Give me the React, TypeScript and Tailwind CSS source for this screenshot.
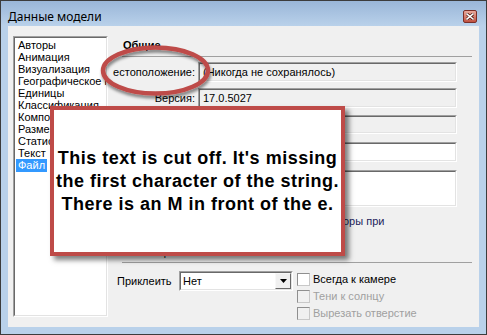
import React from "react";

const sunkenOuter =
  "border border-t-[#a0a0a0] border-l-[#a0a0a0] border-b-white border-r-white";
const sunkenInner =
  "border border-t-[#696969] border-l-[#696969] border-b-[#e3e3e3] border-r-[#e3e3e3]";

function Field({
  h,
  white,
  children,
}: {
  h: string;
  white?: boolean;
  children?: React.ReactNode;
}) {
  return (
    <div className={`${sunkenOuter} w-[259px] ${h}`}>
      <div
        className={`${sunkenInner} h-full w-full flex items-center pl-[3px] whitespace-nowrap overflow-hidden ${
          white ? "bg-white" : "bg-[#f0f0f0]"
        }`}
      >
        {children}
      </div>
    </div>
  );
}

function Row({ label, children }: { label?: string; children: React.ReactNode }) {
  return (
    <div className="flex items-center">
      <div className="w-[73px] text-right whitespace-nowrap flex justify-end">
        <span className="whitespace-nowrap">{label}</span>
      </div>
      <div className="ml-[3px]">{children}</div>
    </div>
  );
}

function Check({ label, disabled }: { label: string; disabled?: boolean }) {
  return (
    <div className="flex items-center h-[17px]">
      <div
        className={`w-[13px] h-[13px] border border-t-[#8f8f8f] border-l-[#8f8f8f] border-b-[#c8c8c8] border-r-[#c8c8c8] ${
          disabled ? "bg-[#f0f0f0]" : "bg-white"
        }`}
      />
      <span
        className={`ml-[3px] whitespace-nowrap ${disabled ? "text-[#a0a0a0]" : "text-black"}`}
      >
        {label}
      </span>
    </div>
  );
}

const items = [
  "Авторы",
  "Анимация",
  "Визуализация",
  "Географическое положение",
  "Единицы",
  "Классификация",
  "Компоненты",
  "Размеры",
  "Статистика",
  "Текст",
  "Файл",
];

export default function App() {
  return (
    <div className="relative w-[487px] h-[335px] overflow-hidden font-['Liberation_Sans',Arial,sans-serif] text-[11px] leading-[13px] text-black">
      <div className="flex flex-col h-full border border-[#3c3c3c] bg-[#b9d1ea]">
        {/* Title bar */}
        <div className="h-[25px] flex items-start pt-[8px] pl-[7px] pr-[9px] bg-gradient-to-b from-[#9ab6d8] to-[#b9d1ea]">
          <span className="font-['Noto_Sans',sans-serif] text-[12px] leading-[16px] text-black flex-1">
            Данные модели
          </span>
          <div className="mt-[1px] w-[14px] h-[13px] rounded-[2px] border border-[#7a2f28] bg-gradient-to-b from-[#e9a99c] to-[#c0503f] flex items-center justify-center">
            <svg width="8" height="7" viewBox="0 0 8 7">
              <path d="M1 1 L7 6 M7 1 L1 6" stroke="#4a1a14" strokeWidth="3" strokeLinecap="square" />
              <path d="M1 1 L7 6 M7 1 L1 6" stroke="#ffffff" strokeWidth="1.6" strokeLinecap="square" />
            </svg>
          </div>
        </div>
        {/* Client */}
        <div className="flex-1 mx-[7px] mb-[7px] bg-[#f0f0f0] flex pl-[5px] pt-[10px] pr-[7px]">
          {/* Tree list */}
          <div className={`${sunkenOuter} w-[95px] h-[281px] shrink-0`}>
            <div className={`${sunkenInner} h-full w-full bg-white overflow-hidden pt-[1px] pl-[1px]`}>
              {items.map((it) => (
                <div key={it} className="h-[12px] leading-[12px] whitespace-nowrap">
                  <span
                    className={`inline-block px-[2px] ${
                      it === "Файл" ? "bg-[#3399ff] text-white h-[13px] leading-[13px]" : ""
                    }`}
                  >
                    {it}
                  </span>
                </div>
              ))}
            </div>
          </div>
          {/* Right panel */}
          <div className="ml-[14px] flex-1 flex flex-col pt-[3px]">
            <div className="h-[13px] font-bold pl-[1px]">Общие</div>
            <div className="mt-[4px] h-[1px] bg-[#a0a0a0]" />
            <div className="mt-[5px]">
              <Row label="естоположение:">
                <Field h="h-[20px]">(Никогда не сохранялось)</Field>
              </Row>
            </div>
            <div className="mt-[6px]">
              <Row label="Версия:">
                <Field h="h-[20px]">17.0.5027</Field>
              </Row>
            </div>
            <div className="mt-[7px]">
              <Row label="Автор:">
                <Field h="h-[19px]" />
              </Row>
            </div>
            <div className="mt-[8px]">
              <Row label="Название:">
                <Field h="h-[20px]" white />
              </Row>
            </div>
            <div className="mt-[8px]">
              <Row label="Описание:">
                <Field h="h-[37px]" white />
              </Row>
            </div>
            <div className="mt-[8px] h-[13px] pl-[221px] whitespace-nowrap text-[#1c1c5c]">
              оры при
            </div>
            <div className="mt-[18px] h-[13px] pl-[1px]">Совмещение</div>
            <div className="mt-[3px] h-[1px] bg-[#a0a0a0]" />
            <div className="mt-[8px] flex items-start -ml-[5px]">
              <div className="w-[62px] h-[20px] flex items-center whitespace-nowrap">Приклеить</div>
              <div className={`${sunkenOuter} w-[114px] h-[20px]`}>
                <div className={`${sunkenInner} h-full w-full bg-white flex items-center`}>
                  <span className="flex-1 pl-[2px] pt-[1px]">Нет</span>
                  <div className="w-[16px] h-[16px] bg-[#f0f0f0] border border-t-[#f8f8f8] border-l-[#f8f8f8] border-b-[#696969] border-r-[#696969] flex items-center justify-center">
                    <svg width="7" height="4" viewBox="0 0 7 4">
                      <path d="M0 0 H7 L3.5 4 Z" fill="#000" />
                    </svg>
                  </div>
                </div>
              </div>
              <div className="ml-[4px] flex flex-col">
                <Check label="Всегда к камере" />
                <Check label="Тени к солнцу" disabled />
                <Check label="Вырезать отверстие" disabled />
              </div>
            </div>
          </div>
        </div>
      </div>

      {/* Ellipse annotation */}
      <svg
        className="absolute left-[95px] top-[40px]"
        width="125"
        height="66"
        viewBox="0 0 125 66"
      >
        <defs>
          <filter id="sh" x="-20%" y="-20%" width="140%" height="150%">
            <feDropShadow dx="1" dy="3" stdDeviation="1.5" floodColor="#000" floodOpacity="0.45" />
          </filter>
        </defs>
        <ellipse
          cx="60.5"
          cy="30.5"
          rx="52.5"
          ry="23"
          fill="none"
          stroke="#be4b48"
          strokeWidth="4.5"
          filter="url(#sh)"
        />
      </svg>

      {/* Callout box */}
      <div className="absolute left-[50px] top-[106px] w-[295px] h-[150px] bg-white border-[4px] border-[#be4b48] shadow-[4px_4px_5px_rgba(0,0,0,0.5)] flex items-center justify-center">
        <div className="font-['Liberation_Sans',Arial,sans-serif] font-bold text-[18px] leading-[23px] tracking-[0.5px] text-center text-black whitespace-nowrap">
          This text is cut off. It's missing
          <br />
          the first character of the string.
          <br />
          There is an M in front of the e.
        </div>
      </div>
    </div>
  );
}
